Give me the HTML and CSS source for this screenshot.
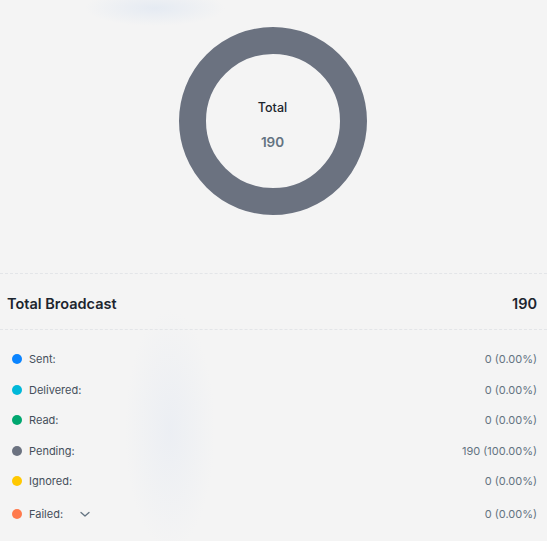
FILE: index.html
```html
<!DOCTYPE html>
<html lang="en">
<head>
    <meta charset="UTF-8">
    <meta name="viewport" content="width=device-width, initial-scale=1.0">
    <title>Broadcast Report</title>
    <link rel="stylesheet" href="styles.css">
</head>
<body>
    <div class="chart">
        <div class="donut">
            <svg width="188" height="188" viewBox="0 0 188 188">
                <circle cx="94" cy="94" r="80.5" fill="none" stroke="#6b7280" stroke-width="27"/>
            </svg>
            <div class="donut-label">
                <span class="donut-title">Total</span>
                <span class="donut-value">190</span>
            </div>
        </div>
    </div>

    <div class="summary">
        <span>Total Broadcast</span>
        <span>190</span>
    </div>

    <ul class="stats">
        <li class="stat">
            <span class="stat-name"><i class="dot sent"></i>Sent:</span>
            <span class="stat-value">0 (0.00%)</span>
        </li>
        <li class="stat">
            <span class="stat-name"><i class="dot delivered"></i>Delivered:</span>
            <span class="stat-value">0 (0.00%)</span>
        </li>
        <li class="stat">
            <span class="stat-name"><i class="dot read"></i>Read:</span>
            <span class="stat-value">0 (0.00%)</span>
        </li>
        <li class="stat">
            <span class="stat-name"><i class="dot pending"></i>Pending:</span>
            <span class="stat-value">190 (100.00%)</span>
        </li>
        <li class="stat">
            <span class="stat-name"><i class="dot ignored"></i>Ignored:</span>
            <span class="stat-value">0 (0.00%)</span>
        </li>
        <li class="stat stat-last">
            <span class="stat-name"><i class="dot failed"></i>Failed:
                <svg class="chevron" width="12" height="12" viewBox="0 0 12 12">
                    <path d="M2 4.5 L6 8 L10 4.5" fill="none" stroke="#637381" stroke-width="1.3" stroke-linecap="round" stroke-linejoin="round"/>
                </svg>
            </span>
            <span class="stat-value">0 (0.00%)</span>
        </li>
    </ul>
</body>
</html>
```

FILE: styles.css
```css
body {
    font-family: 'Inter', 'Roboto', sans-serif;
    margin: 0;
    padding: 0;
    color: #1c252e;
    background-color: #f4f4f4;
    background-image:
        radial-gradient(ellipse 70px 18px at 155px 8px, rgba(225, 232, 242, 0.8), rgba(244, 244, 244, 0)),
        radial-gradient(ellipse 45px 120px at 170px 430px, rgba(232, 236, 243, 0.7), rgba(244, 244, 244, 0));
    min-height: 541px;
}

.chart {
    display: flex;
    justify-content: center;
    padding: 27px 2px 58px 0;
    border-bottom: 1px dashed #e3e5e8;
}

.donut {
    position: relative;
    width: 188px;
    height: 188px;
}

.donut svg {
    display: block;
}

.donut-label {
    position: absolute;
    inset: 0;
    padding-top: 7px;
    display: flex;
    flex-direction: column;
    align-items: center;
    justify-content: center;
    gap: 19px;
}

.donut-title {
    font-size: 12.5px;
    font-weight: 500;
    color: #1c252e;
}

.donut-value {
    font-size: 13.5px;
    font-weight: 600;
    color: #637381;
}

.summary {
    display: flex;
    justify-content: space-between;
    align-items: center;
    height: 52px;
    padding: 3px 10px 0 7px;
    border-bottom: 1px dashed #e3e5e8;
    font-size: 14.5px;
    font-weight: 600;
    color: #1c252e;
}

.stats {
    list-style: none;
    margin: 0;
    padding: 14px 10px 0 12px;
}

.stat {
    display: flex;
    justify-content: space-between;
    align-items: center;
    height: 30.5px;
    font-size: 11px;
}

.stat-last {
    height: 33px;
    padding-top: 1px;
}

.stat-name {
    display: flex;
    align-items: center;
    color: #454f5b;
}

.stat-value {
    color: #637381;
}

.dot {
    width: 10px;
    height: 10px;
    border-radius: 50%;
    margin-right: 7px;
}

.sent { background-color: #0a84ff; }
.delivered { background-color: #00b8d9; }
.read { background-color: #00a76f; }
.pending { background-color: #6b7280; }
.ignored { background-color: #ffc800; }
.failed { background-color: #ff7a4d; }

.chevron {
    margin-left: 16px;
}
```
